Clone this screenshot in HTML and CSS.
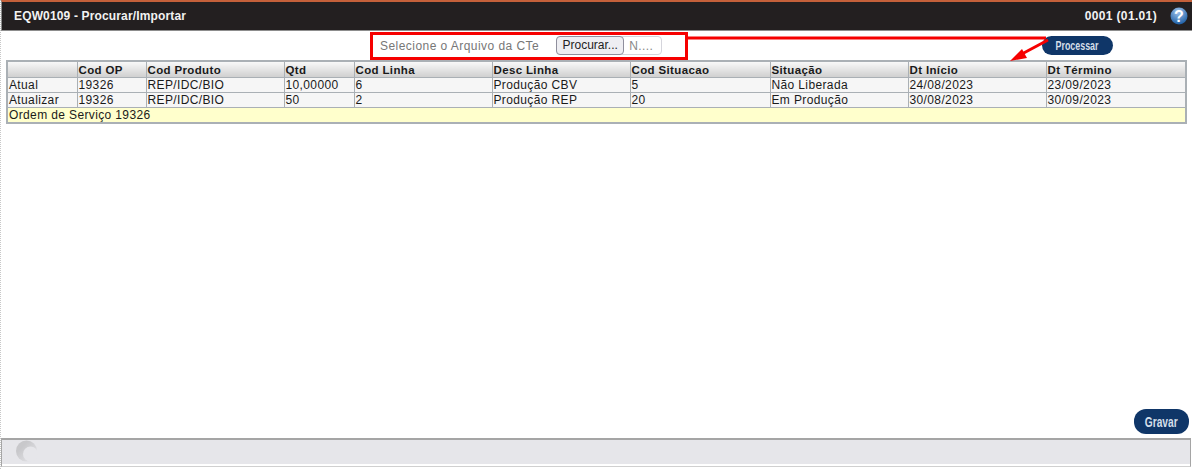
FILE: index.html
```html
<!DOCTYPE html>
<html lang="pt">
<head>
<meta charset="utf-8">
<title>EQW0109 - Procurar/Importar</title>
<link rel="stylesheet" href="styles.css">
</head>
<body>
<div class="page">
  <header class="topbar">
    <span class="title">EQW0109 - Procurar/Importar</span>
    <span class="topright">
      <span class="version">0001 (01.01)</span>
      <svg class="help" width="18" height="18" viewBox="0 0 18 18">
        <defs><radialGradient id="hg" cx="45%" cy="25%" r="80%"><stop offset="0" stop-color="#a4c6ee"/><stop offset="1" stop-color="#14579f"/></radialGradient></defs>
        <circle cx="9" cy="9" r="8.5" fill="url(#hg)"/>
        <text x="9" y="14.5" text-anchor="middle" class="helpq">?</text>
      </svg>
    </span>
  </header>
  <main class="content">
    <div class="toolbar">
      <div class="filebox">
        <span class="filelabel">Selecione o Arquivo da CTe</span>
        <span class="fileinput"><span class="filebtn">Procurar...</span><span class="filename">N....</span></span>
      </div>
      <button class="pill pill-proc"><span class="narrow">Processar</span></button>
    </div>
    <div class="tablewrap">
      <table class="grid">
        <colgroup>
          <col class="c1"><col class="c2"><col class="c3"><col class="c4"><col class="c5"><col class="c6"><col class="c7"><col class="c8"><col class="c9"><col class="c10">
        </colgroup>
        <thead>
          <tr><th></th><th>Cod OP</th><th>Cod Produto</th><th>Qtd</th><th>Cod Linha</th><th>Desc Linha</th><th>Cod Situacao</th><th>Situação</th><th>Dt Início</th><th>Dt Término</th></tr>
        </thead>
        <tbody>
          <tr><td>Atual</td><td>19326</td><td>REP/IDC/BIO</td><td>10,00000</td><td>6</td><td>Produção CBV</td><td>5</td><td>Não Liberada</td><td>24/08/2023</td><td>23/09/2023</td></tr>
          <tr><td>Atualizar</td><td>19326</td><td>REP/IDC/BIO</td><td>50</td><td>2</td><td>Produção REP</td><td>20</td><td>Em Produção</td><td>30/08/2023</td><td>30/09/2023</td></tr>
          <tr class="note"><td colspan="10">Ordem de Serviço 19326</td></tr>
        </tbody>
      </table>
    </div>
    <div class="actions"><button class="pill pill-save"><span class="narrow narrower">Gravar</span></button></div>
  </main>
  <footer class="status">
    <svg width="24" height="24" viewBox="0 0 24 24" class="spinner">
      <defs><linearGradient id="sg" x1="0" y1="0" x2="1" y2="1"><stop offset="0.3" stop-color="#c8c8cb"/><stop offset="0.9" stop-color="#e4e4e8"/></linearGradient></defs>
      <circle cx="11.5" cy="11" r="10.5" fill="url(#sg)"/>
      <circle cx="15.5" cy="14" r="7.5" fill="#e6e6ea"/>
    </svg>
  </footer>
  <svg class="arrows" width="1192" height="469" viewBox="0 0 1192 469">
    <rect x="371.5" y="33.5" width="315" height="25" fill="none" stroke="#f60000" stroke-width="3"/>
    <line x1="686" y1="38" x2="1046" y2="38" stroke="#f60000" stroke-width="3"/>
    <line x1="1048" y1="40" x2="1020" y2="55" stroke="#f60000" stroke-width="3"/>
    <polygon points="1010,61 1022,49 1027,58" fill="#f60000"/>
  </svg>
</div>
</body>
</html>
```
FILE: styles.css
```css
* { box-sizing: border-box; }
html, body { margin: 0; padding: 0; background: #fff; }
.page {
  position: relative;
  width: 1192px;
  height: 469px;
  display: flex;
  flex-direction: column;
  overflow: hidden;
  font-family: "Liberation Sans", Arial, sans-serif;
  border-left: 1px dotted #c8c8c8;
}
.topbar {
  height: 31px;
  flex: none;
  background: #231f20;
  border-top: 2px solid #c4603a;
  border-bottom: 1px solid #8d8d8d;
  border-left: 1px solid #8d8d8d;
  display: flex;
  align-items: center;
  justify-content: space-between;
  padding: 0 4px 0 12px;
  color: #f2f2f2;
  font-size: 12px;
  font-weight: bold;
}
.title { letter-spacing: 0.15px; }
.version { letter-spacing: 0.35px; }
.topright { display: flex; align-items: center; gap: 13px; }
.help { display: block; }
.helpq { font: bold 16px "Liberation Sans", Arial, sans-serif; fill: #fff; }
.content {
  flex: 1;
  display: flex;
  flex-direction: column;
  padding: 0 3px 0 5px;
  min-height: 0;
}
.toolbar {
  height: 29px;
  flex: none;
  display: flex;
  align-items: flex-start;
  position: relative;
}
.filebox {
  margin-left: 374px;
  margin-top: 5px;
  width: 300px;
  display: flex;
  align-items: center;
  gap: 17px;
  color: #777;
  font-size: 12px;
  letter-spacing: 0.45px;
}
.fileinput {
  display: flex;
  align-items: center;
  height: 19px;
  width: 106px;
  border: 1px solid #d5d5dc;
  border-radius: 4px;
}
.filebtn {
  height: 19px;
  width: 68px;
  margin-left: -1px;
  background: #eeeef2;
  border: 1px solid #8f8f9d;
  border-radius: 4px;
  color: #222;
  text-align: center;
  line-height: 17px;
  letter-spacing: 0;
  font-size: 12px;
  flex: none;
}
.filename { padding-left: 5px; color: #888; }
.pill {
  background: #0f3668;
  color: #d5dfea;
  border: 0;
  border-radius: 12px;
  font-family: "Liberation Sans", Arial, sans-serif;
  padding: 0;
  display: block;
}
.narrow { display: inline-block; transform: scaleX(0.74); }
.narrower { transform: scaleX(0.68); }
.pill-proc {
  position: absolute;
  left: 1036px;
  top: 5px;
  width: 71px;
  height: 19px;
  font-size: 12px;
  font-weight: bold;
}
.tablewrap { flex: none; }
.grid {
  width: 1181px;
  table-layout: fixed;
  border-collapse: collapse;
  border: 2px solid #aab0b5;
  font-size: 12px;
  letter-spacing: 0.37px;
  color: #1a1a1a;
}
.grid th, .grid td {
  border: 1px solid #aab0b5;
  padding: 0 1px;
  text-align: left;
  overflow: hidden;
  white-space: nowrap;
}
.grid th {
  height: 16px;
  padding-top: 1px;
  font-size: 11.5px;
  letter-spacing: 0.36px;
  background: linear-gradient(#f8f8f8, #d0d0d0);
}
.grid td { height: 15px; background: #f6f6f6; }
.grid .note td { background: #ffffcc; height: 16px; }
.c1 { width: 70px; }
.c2 { width: 69px; }
.c3 { width: 138px; }
.c4 { width: 70px; }
.c5 { width: 138px; }
.c6 { width: 138px; }
.c7 { width: 140px; }
.c8 { width: 138px; }
.c9 { width: 138px; }
.c10 { width: auto; }
.actions {
  margin-top: auto;
  padding: 0 0 4px 1128px;
}
.pill-save {
  width: 55px;
  height: 25px;
  font-size: 15px;
  font-weight: bold;
}
.status {
  height: 29px;
  flex: none;
  margin: 0 1px 2px 0;
  background: #e6e6ea;
  border: 1px solid #a5a5a5;
  border-top-width: 2px;
  border-bottom: 1px solid #d0d0d0;
  padding: 0 0 0 13px;
  box-shadow: inset 0 -2px 0 #fff;
}
.spinner { display: block; }
.arrows { position: absolute; left: -1px; top: 0; pointer-events: none; }
```
